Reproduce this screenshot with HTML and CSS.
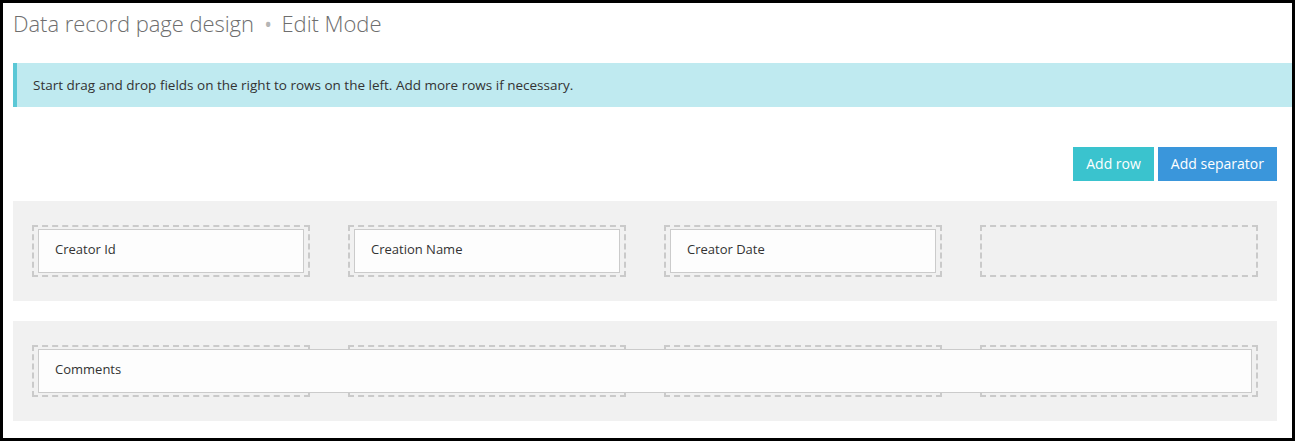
FILE: index.html
```html
<!DOCTYPE html>
<html lang="en">
<head>
<meta charset="utf-8">
<title>Data record page design</title>
<link rel="stylesheet" href="styles.css">
</head>
<body>
<div class="frame">
  <h1 class="title">Data record page design <span class="dot">•</span> Edit Mode</h1>
  <div class="alert">Start drag and drop fields on the right to rows on the left. Add more rows if necessary.</div>
  <div class="actions">
    <button class="btn btn-row">Add row</button>
    <button class="btn btn-sep">Add separator</button>
  </div>
  <div class="panel">
    <div class="slot"><div class="field">Creator Id</div></div>
    <div class="slot"><div class="field">Creation Name</div></div>
    <div class="slot"><div class="field">Creator Date</div></div>
    <div class="slot"></div>
  </div>
  <div class="panel panel-wide">
    <div class="slot"></div>
    <div class="slot"></div>
    <div class="slot"></div>
    <div class="slot"></div>
    <div class="field field-span">Comments</div>
  </div>
</div>
</body>
</html>
```
FILE: styles.css
```css
html, body {
  margin: 0;
  padding: 0;
}
body {
  background: #000;
  font-family: "Open Sans", "Liberation Sans", sans-serif;
  color: #333;
}
.frame {
  margin: 3px;
  height: 435px;
  background: #fff;
  padding: 4px 15px 0 10px;
  box-sizing: border-box;
  overflow: hidden;
}
.title {
  margin: 0;
  height: 33px;
  font-size: 22px;
  font-weight: 300;
  line-height: 33px;
  color: #6e6e6e;
  letter-spacing: -0.05px;
}
.dot {
  display: inline-block;
  padding: 0 4px 0 4px;
  color: #b5b5b5;
  transform: scale(1.3);
}
.alert {
  margin: 23px -15px 0 0;
  padding: 12px 16px;
  background: #bfeaf0;
  border-left: 4px solid #5bc8d6;
  font-size: 13.5px;
  line-height: 20px;
  color: #333;
}
.actions {
  display: flex;
  justify-content: flex-end;
  gap: 4px;
  margin-top: 40px;
}
.btn {
  border: 0;
  border-radius: 0;
  margin: 0;
  padding: 7px 13px;
  font-family: inherit;
  font-size: 14px;
  line-height: 20px;
  color: #fff;
}
.btn-row {
  background: #3ac3ce;
}
.btn-sep {
  background: #3a96db;
}
.panel {
  position: relative;
  display: grid;
  grid-template-columns: repeat(4, 1fr);
  margin-top: 20px;
  padding: 24px 0;
  background: #f1f1f1;
}
.slot {
  margin: 0 19px 0 19px;
  height: 52px;
  box-sizing: border-box;
  border: 2px dashed #cacaca;
  padding: 2px 4px 2px 4px;
}
.field {
  height: 44px;
  box-sizing: border-box;
  border: 1px solid #cbcbcb;
  background: #fdfdfd;
  padding: 9px 16px 0;
  font-size: 13px;
  line-height: 20px;
  color: #333;
}
.field-span {
  position: absolute;
  left: 25px;
  top: 28px;
  width: 1214px;
}
```
